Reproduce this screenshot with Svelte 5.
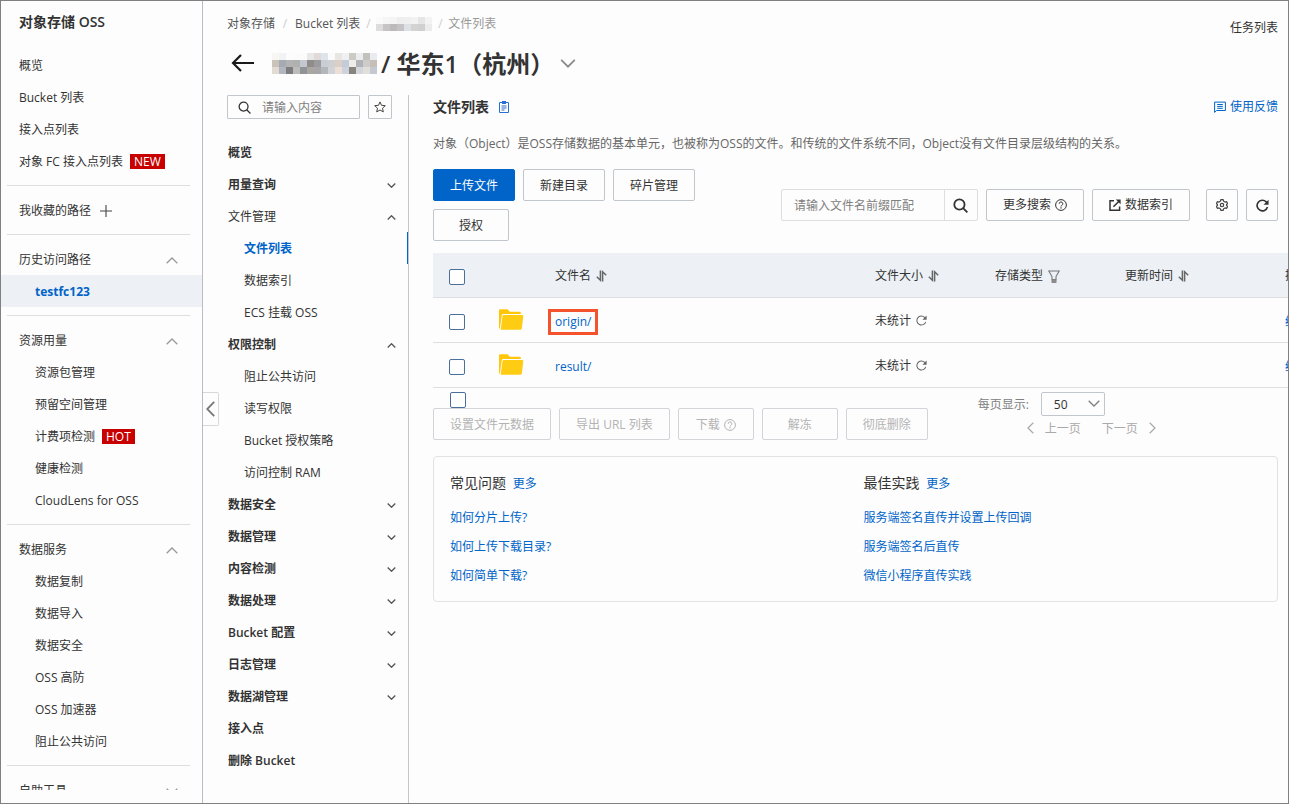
<script>
  const sections = [
    {
      items: [
        { label: '概览' },
        { label: 'Bucket 列表' },
        { label: '接入点列表' },
        { label: '对象 FC 接入点列表', badge: 'NEW' }
      ]
    },
    { items: [{ label: '我收藏的路径', plus: true }] },
    { title: '历史访问路径', items: [{ label: 'testfc123', active: true }] },
    {
      title: '资源用量',
      items: [
        { label: '资源包管理' },
        { label: '预留空间管理' },
        { label: '计费项检测', badge: 'HOT' },
        { label: '健康检测' },
        { label: 'CloudLens for OSS' }
      ]
    },
    {
      title: '数据服务',
      items: [
        { label: '数据复制' },
        { label: '数据导入' },
        { label: '数据安全' },
        { label: 'OSS 高防' },
        { label: 'OSS 加速器' },
        { label: '阻止公共访问' }
      ]
    },
    { title: '自助工具', closed: true, items: [] }
  ];

  const menu = [
    { label: '概览' },
    { label: '用量查询', arrow: 'down' },
    {
      label: '文件管理',
      arrow: 'up',
      light: true,
      children: [{ label: '文件列表', active: true }, { label: '数据索引' }, { label: 'ECS 挂载 OSS' }]
    },
    {
      label: '权限控制',
      arrow: 'up',
      children: [
        { label: '阻止公共访问' },
        { label: '读写权限' },
        { label: 'Bucket 授权策略' },
        { label: '访问控制 RAM' }
      ]
    },
    { label: '数据安全', arrow: 'down' },
    { label: '数据管理', arrow: 'down' },
    { label: '内容检测', arrow: 'down' },
    { label: '数据处理', arrow: 'down' },
    { label: 'Bucket 配置', arrow: 'down' },
    { label: '日志管理', arrow: 'down' },
    { label: '数据湖管理', arrow: 'down' },
    { label: '接入点' },
    { label: '删除 Bucket' }
  ];

  const files = [
    { name: 'origin/', marked: true },
    { name: 'result/', marked: false }
  ];

  const help = [
    { title: '常见问题', links: ['如何分片上传?', '如何上传下载目录?', '如何简单下载?'] },
    { title: '最佳实践', links: ['服务端签名直传并设置上传回调', '服务端签名后直传', '微信小程序直传实践'] }
  ];

  const smallMosaic = [
    ['#fafafa', '#f6f6f6', '#f4f4f5', '#eeeeee', '#efefef', '#f1f2f2', '#e6e6e6', '#f3f3f3'],
    ['#dedddd', '#c6c4c5', '#bdbabb', '#c4c4c6', '#dde1e6', '#d3d3d1', '#d0d0d0', '#ececec']
  ];
  const largeMosaic = [
    ['#f7f6f3', '#f2f3f5', '#fcfcfc', '#fbfbfb', '#fbfbfb', '#e9e8e8', '#e0dbd9', '#dfe4ec', '#fbfbfb', '#e8e6e2', '#eff0f2', '#cccac5', '#eaecee', '#c4c1bc', '#e8ebef'],
    ['#c9c3b9', '#a6aab2', '#b3b3b3', '#b1b0b0', '#c3c8d0', '#908c8b', '#9c9b9f', '#c9cdd4', '#cfd0d2', '#dccfc8', '#c4ccd8', '#efece9', '#afb3b9', '#ceccc9', '#c6bfb8'],
    ['#e2dbd2', '#b2b7bf', '#7d7d7f', '#bcbcbb', '#8f9498', '#aaa7a3', '#a7a5a7', '#b3b6ba', '#d0d3d8', '#ecdfd6', '#cdd2dc', '#86847f', '#d3d6da', '#e2dfda', '#c3c9d2']
  ];

  let pageSize = $state('50');
</script>

{#snippet chevron(dir, w, h)}
  <svg class="chev" width={w} height={h} viewBox="0 0 12 7" aria-hidden="true">
    <path d={dir === 'up' ? 'M.7 6.3 6 1l5.3 5.3' : 'M.7.7 6 6 11.3.7'} fill="none" stroke="currentColor" stroke-width={w < 10 ? 1.8 : 1.3} />
  </svg>
{/snippet}

{#snippet sort()}
  <svg width="11" height="12" viewBox="0 0 11 12" aria-hidden="true">
    <path d="M4.4.4v9.800L.8 6.800" fill="none" stroke="#666" stroke-width="1.5" />
    <path d="M6.600 11.600V1.800L10.200 5.200" fill="none" stroke="#666" stroke-width="1.5" />
  </svg>
{/snippet}

{#snippet reload(size, width)}
  <svg width={size} height={size} viewBox="0 0 12 12" aria-hidden="true">
    <path d="M10.6 7.4A4.9 4.9 0 1 1 9.4 2.6L10.6 4" fill="none" stroke="currentColor" stroke-width={width} />
    <path d="M11.6.6v4.6H7z" fill="currentColor" />
  </svg>
{/snippet}

{#snippet search(size, width)}
  <svg width={size} height={size} viewBox="0 0 14 14" aria-hidden="true">
    <circle cx="6" cy="6" r="4.8" fill="none" stroke="#333" stroke-width={width} />
    <path d="M9.4 9.4 13.4 13.4" stroke="#333" stroke-width={width} />
  </svg>
{/snippet}

{#snippet question()}
  <svg width="12" height="12" viewBox="0 0 12 12" aria-hidden="true">
    <circle cx="6" cy="6" r="5.4" fill="none" stroke="currentColor" stroke-width="1" />
    <path d="M4.2 4.8a1.8 1.8 0 1 1 2.5 1.6Q6 6.7 6 7.5" fill="none" stroke="currentColor" stroke-width="1" />
    <rect x="5.4" y="8.3" width="1.2" height="1.2" fill="currentColor" />
  </svg>
{/snippet}

{#snippet mosaic(rows, w, h)}
  <svg width={rows[0].length * w} height={rows.length * h} shape-rendering="crispEdges" aria-hidden="true">
    {#each rows as row, y}
      {#each row as fill, x}
        <rect x={x * w} y={y * h} width={w} height={h} {fill} />
      {/each}
    {/each}
  </svg>
{/snippet}

<div class="page">
  <aside class="side">
    <h2>对象存储 OSS</h2>
    {#each sections as section, i}
      {#if i > 0}<hr />{/if}
      {#if section.title}
        <button class="side-head">
          <span>{section.title}</span>
          {@render chevron(section.closed ? 'down' : 'up', 12, 7)}
        </button>
      {/if}
      {#each section.items as item}
        <a href="#top" class="side-item" class:sub={section.title} class:active={item.active}>
          <span>{item.label}</span>
          {#if item.badge}<span class="badge">{item.badge}</span>{/if}
          {#if item.plus}
            <svg width="12" height="12" viewBox="0 0 12 12" aria-hidden="true"><path d="M6 0v12M0 6h12" stroke="#444" stroke-width="1.1" /></svg>
          {/if}
        </a>
      {/each}
    {/each}
  </aside>

  <main>
    <button class="collapse" aria-label="收起">
      <svg width="9" height="16" viewBox="0 0 9 16" aria-hidden="true"><path d="M8.2.8 1.2 8l7 7.2" fill="none" stroke="#777" stroke-width="1.8" /></svg>
    </button>

    <header>
      <div>
        <nav class="crumbs">
          <a href="#top">对象存储</a><i>/</i><a href="#top">Bucket 列表</a><i class="tight">/</i>{@render mosaic(smallMosaic, 7, 7)}<i class="tight">/</i><span>文件列表</span>
        </nav>
        <div class="heading">
          <button class="back" aria-label="返回">
            <svg width="23" height="18" viewBox="0 0 23 18" aria-hidden="true"><path d="M10 1 2 9l8 8M2 9h21" fill="none" stroke="#1a1a1a" stroke-width="2.2" /></svg>
          </button>
          {@render mosaic(largeMosaic, 7, 7)}
          <h1>/ 华东1（杭州）</h1>
          {@render chevron('down', 16, 9)}
        </div>
      </div>
      <a class="tasks" href="#top">任务列表</a>
    </header>

    <div class="body">
      <nav class="menu">
        <div class="menu-search">
          <label>
            {@render search(13, 1.4)}
            <input type="text" placeholder="请输入内容" aria-label="请输入内容" />
          </label>
          <button aria-label="收藏">
            <svg width="12" height="12" viewBox="0 0 12 12" aria-hidden="true"><path d="m6 .9 1.5 3.4 3.8.4-2.8 2.5.8 3.7L6 9l-3.3 1.9.8-3.7L.7 4.7l3.8-.4z" fill="none" stroke="#444" stroke-width="1" /></svg>
          </button>
        </div>
        {#each menu as item}
          <a href="#top" class="menu-item" class:light={item.light}>
            <span>{item.label}</span>
            {#if item.arrow}{@render chevron(item.arrow, 9, 5)}{/if}
          </a>
          {#each item.children ?? [] as child}
            <a href="#top" class="menu-item child" class:active={child.active}>{child.label}</a>
          {/each}
        {/each}
      </nav>

      <section class="content">
        <div class="title">
          <h3>文件列表</h3>
          <svg width="10" height="12" viewBox="0 0 10 12" aria-hidden="true">
            <path d="M.5 1.5h9v10h-9zM2.5 5h5M2.5 7h5M2.5 9h3" fill="none" stroke="#2a6fd0" stroke-width="1" />
            <rect x="3" y="0" width="4" height="3" fill="#2a6fd0" />
          </svg>
          <a class="feedback" href="#top">
            <svg width="12" height="12" viewBox="0 0 12 12" aria-hidden="true">
              <path d="M.6 11.4V1.1h10.8v8.4H2.6zM3.2 3.5h5.6M3.2 5.4h5.6M3.2 7.3h5.6" fill="none" stroke="currentColor" stroke-width="1" />
            </svg>
            使用反馈
          </a>
        </div>
        <p>对象（Object）是OSS存储数据的基本单元，也被称为OSS的文件。和传统的文件系统不同，Object没有文件目录层级结构的关系。</p>

        <div class="toolbar">
          <div class="actions">
            <button class="btn primary">上传文件</button>
            <button class="btn">新建目录</button>
            <button class="btn">碎片管理</button>
            <button class="btn wide">授权</button>
          </div>
          <div class="tools">
            <div class="prefix">
              <input type="text" placeholder="请输入文件名前缀匹配" aria-label="请输入文件名前缀匹配" />
              <button aria-label="搜索">{@render search(15, 1.7)}</button>
            </div>
            <button class="btn flat">更多搜索 {@render question()}</button>
            <button class="btn flat">
              <svg width="12" height="12" viewBox="0 0 12 12" aria-hidden="true">
                <path d="M5 1.7H1v9.6h9.6V7.4M4.4 7.8 10 2.2" fill="none" stroke="#333" stroke-width="1.5" />
                <path d="M6.8.4h4.8v4.8z" fill="#333" />
              </svg>
              数据索引
            </button>
            <div class="icons">
              <button class="btn flat" aria-label="设置">
                <svg width="12" height="12" viewBox="0 0 12 12" aria-hidden="true">
                  <path d="M4.9.7h2.200l.5 1.500 1.500.8 1.500-.4 1 1.900-1 1.100v.8l1 1.100-1 1.900-1.500-.4-1.500.8-.5 1.500H4.900l-.5-1.500-1.500-.8-1.500.4-1-1.900 1-1.100v-.8l-1-1.100 1-1.900 1.500.4 1.500-.8z" fill="none" stroke="#444" stroke-width="1.2" />
                  <circle cx="6" cy="6" r="1.7" fill="none" stroke="#444" stroke-width="1.2" />
                </svg>
              </button>
              <button class="btn flat" aria-label="刷新">{@render reload(13, 1.5)}</button>
            </div>
          </div>
        </div>

        <div class="table-wrap">
          <table>
            <colgroup>
              <col class="c-check" /><col class="c-icon" /><col class="c-name" /><col class="c-size" /><col class="c-type" /><col class="c-time" /><col class="c-ops" />
            </colgroup>
            <thead>
              <tr>
                <th><input type="checkbox" aria-label="全选" /></th>
                <th></th>
                <th><span class="cell">文件名 {@render sort()}</span></th>
                <th><span class="cell">文件大小 {@render sort()}</span></th>
                <th>
                  <span class="cell">存储类型
                    <svg width="12" height="13" viewBox="0 0 12 13" aria-hidden="true">
                      <path d="M.8 1h10.4L8 6.6v3H4v-3z" fill="none" stroke="#777" stroke-width="1.1" />
                      <path d="M3.5 9.5h5V13h-5z" fill="#8a8a8a" />
                    </svg>
                  </span>
                </th>
                <th><span class="cell">更新时间 {@render sort()}</span></th>
                <th>操作</th>
              </tr>
            </thead>
            <tbody>
              {#each files as file}
                <tr>
                  <td><input type="checkbox" aria-label={file.name} /></td>
                  <td>
                    <svg class="folder" width="25" height="21" viewBox="0 0 25 21" aria-hidden="true">
                      <path d="M0 1.5Q0 .3 1.2.3h7.3l2.3 2.4h10q1 0 1 1V5H4.4Q3 5 2.7 6.4L.9 19.5H0z" fill="#ffc60a" />
                      <path d="M4.7 6h18.6q1.2 0 1 1.2l-1.5 12.3q-.2 1.300-1.500 1.300H1.700L3.500 7.200Q3.700 6 4.700 6z" fill="#ffcc14" />
                    </svg>
                  </td>
                  <td><a href="#top" class:marked={file.marked}>{file.name}</a></td>
                  <td><span class="cell stat">未统计 {@render reload(11, 1.1)}</span></td>
                  <td></td>
                  <td></td>
                  <td><a href="#top">统计</a></td>
                </tr>
              {/each}
            </tbody>
          </table>
        </div>

        <div class="footer">
          <div>
            <input type="checkbox" aria-label="选择本页" />
            <div class="batch">
              <button class="btn" disabled>设置文件元数据</button>
              <button class="btn" disabled>导出 URL 列表</button>
              <button class="btn wide" disabled>下载 {@render question()}</button>
              <button class="btn wide" disabled>解冻</button>
              <button class="btn" disabled>彻底删除</button>
            </div>
          </div>
          <div class="pager">
            <div class="size">
              <label for="page-size">每页显示:</label>
              <div class="select">
                <select id="page-size" bind:value={pageSize}>
                  <option>20</option><option>50</option><option>100</option>
                </select>
                {@render chevron('down', 12, 7)}
              </div>
            </div>
            <div class="turn">
              <button disabled><svg width="7" height="12" viewBox="0 0 7 12" aria-hidden="true"><path d="M6.3.7 1 6l5.3 5.3" fill="none" stroke="currentColor" stroke-width="1.3" /></svg>上一页</button>
              <button disabled>下一页<svg width="7" height="12" viewBox="0 0 7 12" aria-hidden="true"><path d="M.7.7 6 6 .7 11.3" fill="none" stroke="currentColor" stroke-width="1.3" /></svg></button>
            </div>
          </div>
        </div>

        <div class="help">
          {#each help as col}
            <div>
              <h4>{col.title} <a href="#top">更多</a></h4>
              {#each col.links as link}<div class="line"><a href="#top">{link}</a></div>{/each}
            </div>
          {/each}
        </div>
      </section>
    </div>
  </main>
</div>

<style>
  :global(body) { background: #fdfdfd; }
  * { box-sizing: border-box; }
  .page {
    display: flex;
    height: 100vh;
    border: 1px solid #808080;
    overflow: hidden;
    background: #fdfdfd;
    color: #333;
    font: 12px/20px "Open Sans", "Noto Sans CJK SC", sans-serif;
  }
  a { color: #0064c8; text-decoration: none; }
  button, input, select { font: inherit; color: inherit; margin: 0; }
  button { padding: 0; border: 0; background: none; }
  svg { display: block; flex: none; }
  h1, h2, h3, h4, p { margin: 0; }

  .side {
    flex: none;
    width: 201px;
    margin-bottom: 13px;
    overflow: hidden;
    position: relative;
  }
  h2 { font-size: 14px; line-height: 42px; margin-bottom: 6px; padding-left: 18px; font-weight: 600; }
  .side-head, .side-item { display: flex; align-items: center; width: 100%; height: 32px; padding: 2px 0 0 18px; color: #333; }
  .side-head { justify-content: space-between; padding-right: 24px; }
  .side-head .chev { color: #999; }
  .side-item { gap: 7px; }
  .side-item.sub { padding-left: 34px; }
  .side-item.active { background: #edf1f6; color: #0064c8; font-weight: 700; }
  .side-item svg { margin: 0 2px; }
  .badge { background: #c80000; color: #fff; padding: 0 4px; line-height: 15px; margin-bottom: 2px; }
  hr { border: 0; height: 1px; background: #dedede; margin: 8px 12px 8px 6px; }

  main { flex: 1; min-width: 0; display: flex; flex-direction: column; border-left: 1px solid #b9bcc6; padding-left: 24px; position: relative; }
  .collapse {
    position: absolute;
    left: 0;
    top: 391px;
    width: 16px;
    height: 34px;
    border: 1px solid #d8d8d8;
    border-left: 0;
    border-radius: 0 2px 2px 0;
    padding-left: 3px;
  }
  header { display: flex; justify-content: space-between; padding: 13px 10px 0 0; height: 94px; }
  .crumbs { display: flex; align-items: center; height: 20px; color: #999; }
  .crumbs a { color: #555; }
  .crumbs i { font-style: normal; color: #ccc; width: 20px; text-align: center; }
  .crumbs i.tight { width: 16px; }
  .heading { display: flex; align-items: center; height: 36px; margin-top: 11px; }
  .back { margin: 0 18px 0 4px; }
  h1 { font-size: 24px; line-height: 36px; font-weight: 600; margin-left: 4px; padding-top: 2px; }
  .heading .chev { color: #888; margin-left: 6px; }
  .tasks { color: #333; height: 20px; margin-top: 4px; }

  .body { flex: 1; display: flex; min-height: 0; }
  .menu { flex: none; width: 182px; border-right: 1px solid #c0c6cc; }
  .menu-search { display: flex; gap: 8px; padding-right: 16px; margin-bottom: 17px; }
  .menu-search label { flex: 1; min-width: 0; height: 24px; display: flex; align-items: center; gap: 11px; padding: 0 10px; border: 1px solid #c0c6cc; border-radius: 1px; }
  .menu-search button { width: 24px; height: 24px; display: grid; place-items: center; border: 1px solid #c0c6cc; border-radius: 1px; }
  input[type="text"] { border: 0; outline: 0; background: none; min-width: 0; width: 100%; padding: 2px 0 0; }
  input::placeholder { color: #808080; opacity: 1; }
  .menu-item { display: flex; align-items: center; justify-content: space-between; height: 32px; padding: 2px 12px 0 1px; color: #333; font-weight: 600; }
  .menu-item .chev { color: #555; }
  .menu-item.light, .menu-item.child { font-weight: 400; }
  .menu-item.child { padding-left: 17px; }
  .menu-item.active { color: #0064c8; font-weight: 600; border-right: 1px solid #0064c8; }

  .content { flex: 1; min-width: 0; padding-left: 24px; }
  .title { display: flex; align-items: center; height: 24px; gap: 10px; margin-right: 10px; }
  h3 { font-size: 14px; font-weight: 600; }
  .feedback { margin-left: auto; display: flex; align-items: center; gap: 4px; }
  p { margin: 15px 10px 15px 0; color: #666; }

  .btn {
    display: inline-flex;
    align-items: center;
    justify-content: center;
    gap: 4px;
    height: 32px;
    padding: 2px 16px 0;
    border: 1px solid #c0c6cc;
    border-radius: 2px;
    white-space: nowrap;
  }
  .btn.flat { padding-top: 0; }
  .btn.wide { width: 76px; }
  .btn.primary { background: #0064c8; border-color: #0064c8; color: #fff; }
  .btn:disabled { color: #b3b3b3; border-color: #d2d4d8; }
  .toolbar { display: flex; align-items: center; gap: 16px; margin-right: 10px; }
  .actions { flex: 1; display: flex; flex-wrap: wrap; gap: 8px; }
  .tools, .icons { flex: none; display: flex; gap: 8px; }
  .icons { margin-left: 8px; }
  .icons .btn { width: 32px; padding: 0; }
  .prefix { display: flex; width: 197px; height: 32px; border: 1px solid #dedede; border-radius: 2px; }
  .prefix input[type="text"] { flex: 1; padding-left: 12px; }
  .prefix button { flex: none; width: 33px; display: grid; place-items: center; border-left: 1px solid #dedede; }

  .table-wrap { margin-top: 12px; overflow: hidden; }
  table { table-layout: fixed; width: 1000px; border-collapse: separate; border-spacing: 0; }
  .c-check { width: 50px; } .c-icon { width: 56px; } .c-name { width: 320px; } .c-size { width: 120px; }
  .c-type { width: 130px; } .c-time { width: 160px; } .c-ops { width: 164px; }
  th, td { height: 45px; padding: 2px 16px 0; text-align: left; font-weight: 400; border-bottom: 1px solid #dedede; vertical-align: middle; }
  th { background: #edf1f6; }
  .cell { display: flex; align-items: center; gap: 5px; }
  .stat svg { color: #666; margin-bottom: 2px; }
  .folder { margin-bottom: 4px; }
  input[type="checkbox"] { appearance: none; display: block; width: 16px; height: 16px; border: 1px solid #4b6f9b; border-radius: 2px; background: #fff; margin-top: 2px; }
  .marked { display: block; width: fit-content; line-height: 20px; outline: 3px solid #f5532d; margin: 0 -4px; padding: 0 4px; }
  tbody a { position: relative; top: 1px; }

  .footer { display: flex; gap: 50px; margin-right: 10px; }
  .footer input { margin: 4px 0 0 17px; }
  .batch { display: flex; gap: 8px; }
  .pager { padding-top: 4px; color: #808080; }
  .size { display: flex; align-items: center; gap: 12px; height: 24px; }
  .size label { padding-top: 2px; }
  .select { position: relative; width: 64px; height: 24px; }
  select { appearance: none; width: 100%; height: 24px; padding: 2px 12px 0; border: 1px solid #c0c6cc; border-radius: 2px; background: none; color: #333; }
  .select .chev { position: absolute; right: 5px; top: 8px; pointer-events: none; }
  .turn { display: flex; gap: 21px; height: 24px; padding-left: 49px; }
  .turn button { display: flex; align-items: center; gap: 11px; color: #aaa; padding-top: 2px; }
  .turn svg { margin-bottom: 2px; }

  .help { display: grid; grid-template-columns: 1fr 1fr; margin: 16px 10px 0 0; padding: 15px 0 11px 16px; border: 1px solid #e2e2e2; border-radius: 4px; }
  h4 { font-size: 14px; line-height: 22px; font-weight: 400; margin-bottom: 8px; }
  h4 a { font-size: 12px; margin-left: 3px; }
  .line { line-height: 29px; }
</style>
